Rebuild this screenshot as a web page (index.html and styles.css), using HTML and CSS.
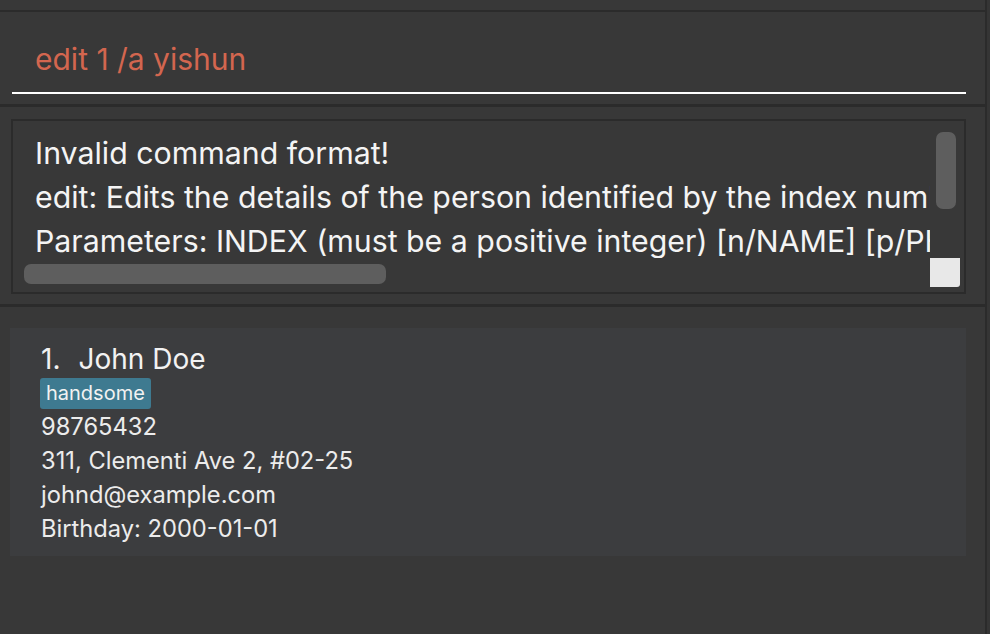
FILE: index.html
```html
<!DOCTYPE html>
<html>
<head>
<meta charset="utf-8">
<link rel="stylesheet" href="styles.css">
</head>
<body>
<div class="app">
  <div class="main">
    <div class="top-gap"></div>
    <div class="rule"></div>
    <div class="command">
      <div class="command-input">edit 1 /a yishun</div>
    </div>
    <div class="sep"></div>
    <div class="result">
      <div class="result-box">
        <div class="result-text">
          <div class="line">Invalid command format!</div>
          <div class="line">edit: Edits the details of the person identified by the index number used in the displayed person list.</div>
          <div class="line">Parameters: INDEX (must be a positive integer) [n/NAME] [p/PHONE] [e/EMAIL] [a/ADDRESS] [t/TAG]...</div>
        </div>
        <div class="vscroll"><div class="vthumb"></div></div>
        <div class="hscroll"><div class="hthumb"></div></div>
        <div class="corner"></div>
      </div>
    </div>
    <div class="sep"></div>
    <div class="list">
      <div class="card">
        <div class="name"><span class="idx">1.</span>John Doe</div>
        <div class="tags"><span class="tag">handsome</span></div>
        <div class="detail">98765432</div>
        <div class="detail">311, Clementi Ave 2, #02-25</div>
        <div class="detail">johnd@example.com</div>
        <div class="detail">Birthday: 2000-01-01</div>
      </div>
    </div>
  </div>
  <div class="edge"></div>
</div>
</body>
</html>
```

FILE: styles.css
```css
* { box-sizing: border-box; }
html, body {
  margin: 0;
  padding: 0;
  background: #383838;
  font-family: "Inter", "Open Sans", sans-serif;
  overflow: hidden;
}
.app {
  display: flex;
  width: 990px;
  height: 634px;
}
.main {
  width: 985px;
  display: flex;
  flex-direction: column;
}
.edge {
  width: 5px;
  border-left: 2px solid #2b2b2b;
  background: #353535;
}
.top-gap { height: 10px; }
.rule { height: 2px; background: #2b2b2b; }
.command {
  height: 92px;
  padding: 0 19px 10px 12px;
  display: flex;
  flex-direction: column;
  justify-content: flex-end;
}
.command-input {
  height: 72px;
  border-bottom: 2px solid #ffffff;
  padding-left: 23px;
  padding-top: 19px;
  color: #d3664f;
  font-size: 30px;
  line-height: 36px;
}
.sep { height: 3px; background: #2b2b2b; }
.result {
  height: 197px;
  padding: 12px 19px 10px 11px;
}
.result-box {
  height: 100%;
  border: 2px solid #2b2b2b;
  display: grid;
  grid-template-columns: 1fr 30px;
  grid-template-rows: 1fr 29px;
  padding: 0 4px 5px 0;
}
.result-text {
  overflow: hidden;
  padding: 10px 0 0 22px;
  color: #f4f4f4;
  font-size: 30.3px;
  line-height: 44px;
  white-space: nowrap;
}
.vscroll { padding: 11px 4px 0 6px; }
.vthumb { width: 20px; height: 77px; background: #5e5e5e; border-radius: 7px; }
.hscroll { padding: 6px 0 0 11px; }
.hthumb { width: 362px; height: 20px; background: #5e5e5e; border-radius: 7px; }
.corner { background: #e8e8e8; border-bottom-right-radius: 3px; }
.list {
  flex: 1;
  padding: 21px 19px 0 10px;
}
.card {
  height: 228px;
  background: #3c3d3f;
  padding: 14px 0 0 31px;
  color: #ececec;
}
.name {
  font-size: 28px;
  line-height: 34px;
  color: #f2f2f2;
}
.idx { margin-right: 18px; }
.tags { margin: 2px 0 0 -1px; height: 32px; }
.tag {
  display: inline-block;
  background: #3e7a90;
  color: #f2f2f2;
  font-size: 20px;
  line-height: 31px;
  padding: 0 6px;
  border-radius: 3px;
}
.detail {
  font-size: 23.7px;
  line-height: 34px;
}
```
